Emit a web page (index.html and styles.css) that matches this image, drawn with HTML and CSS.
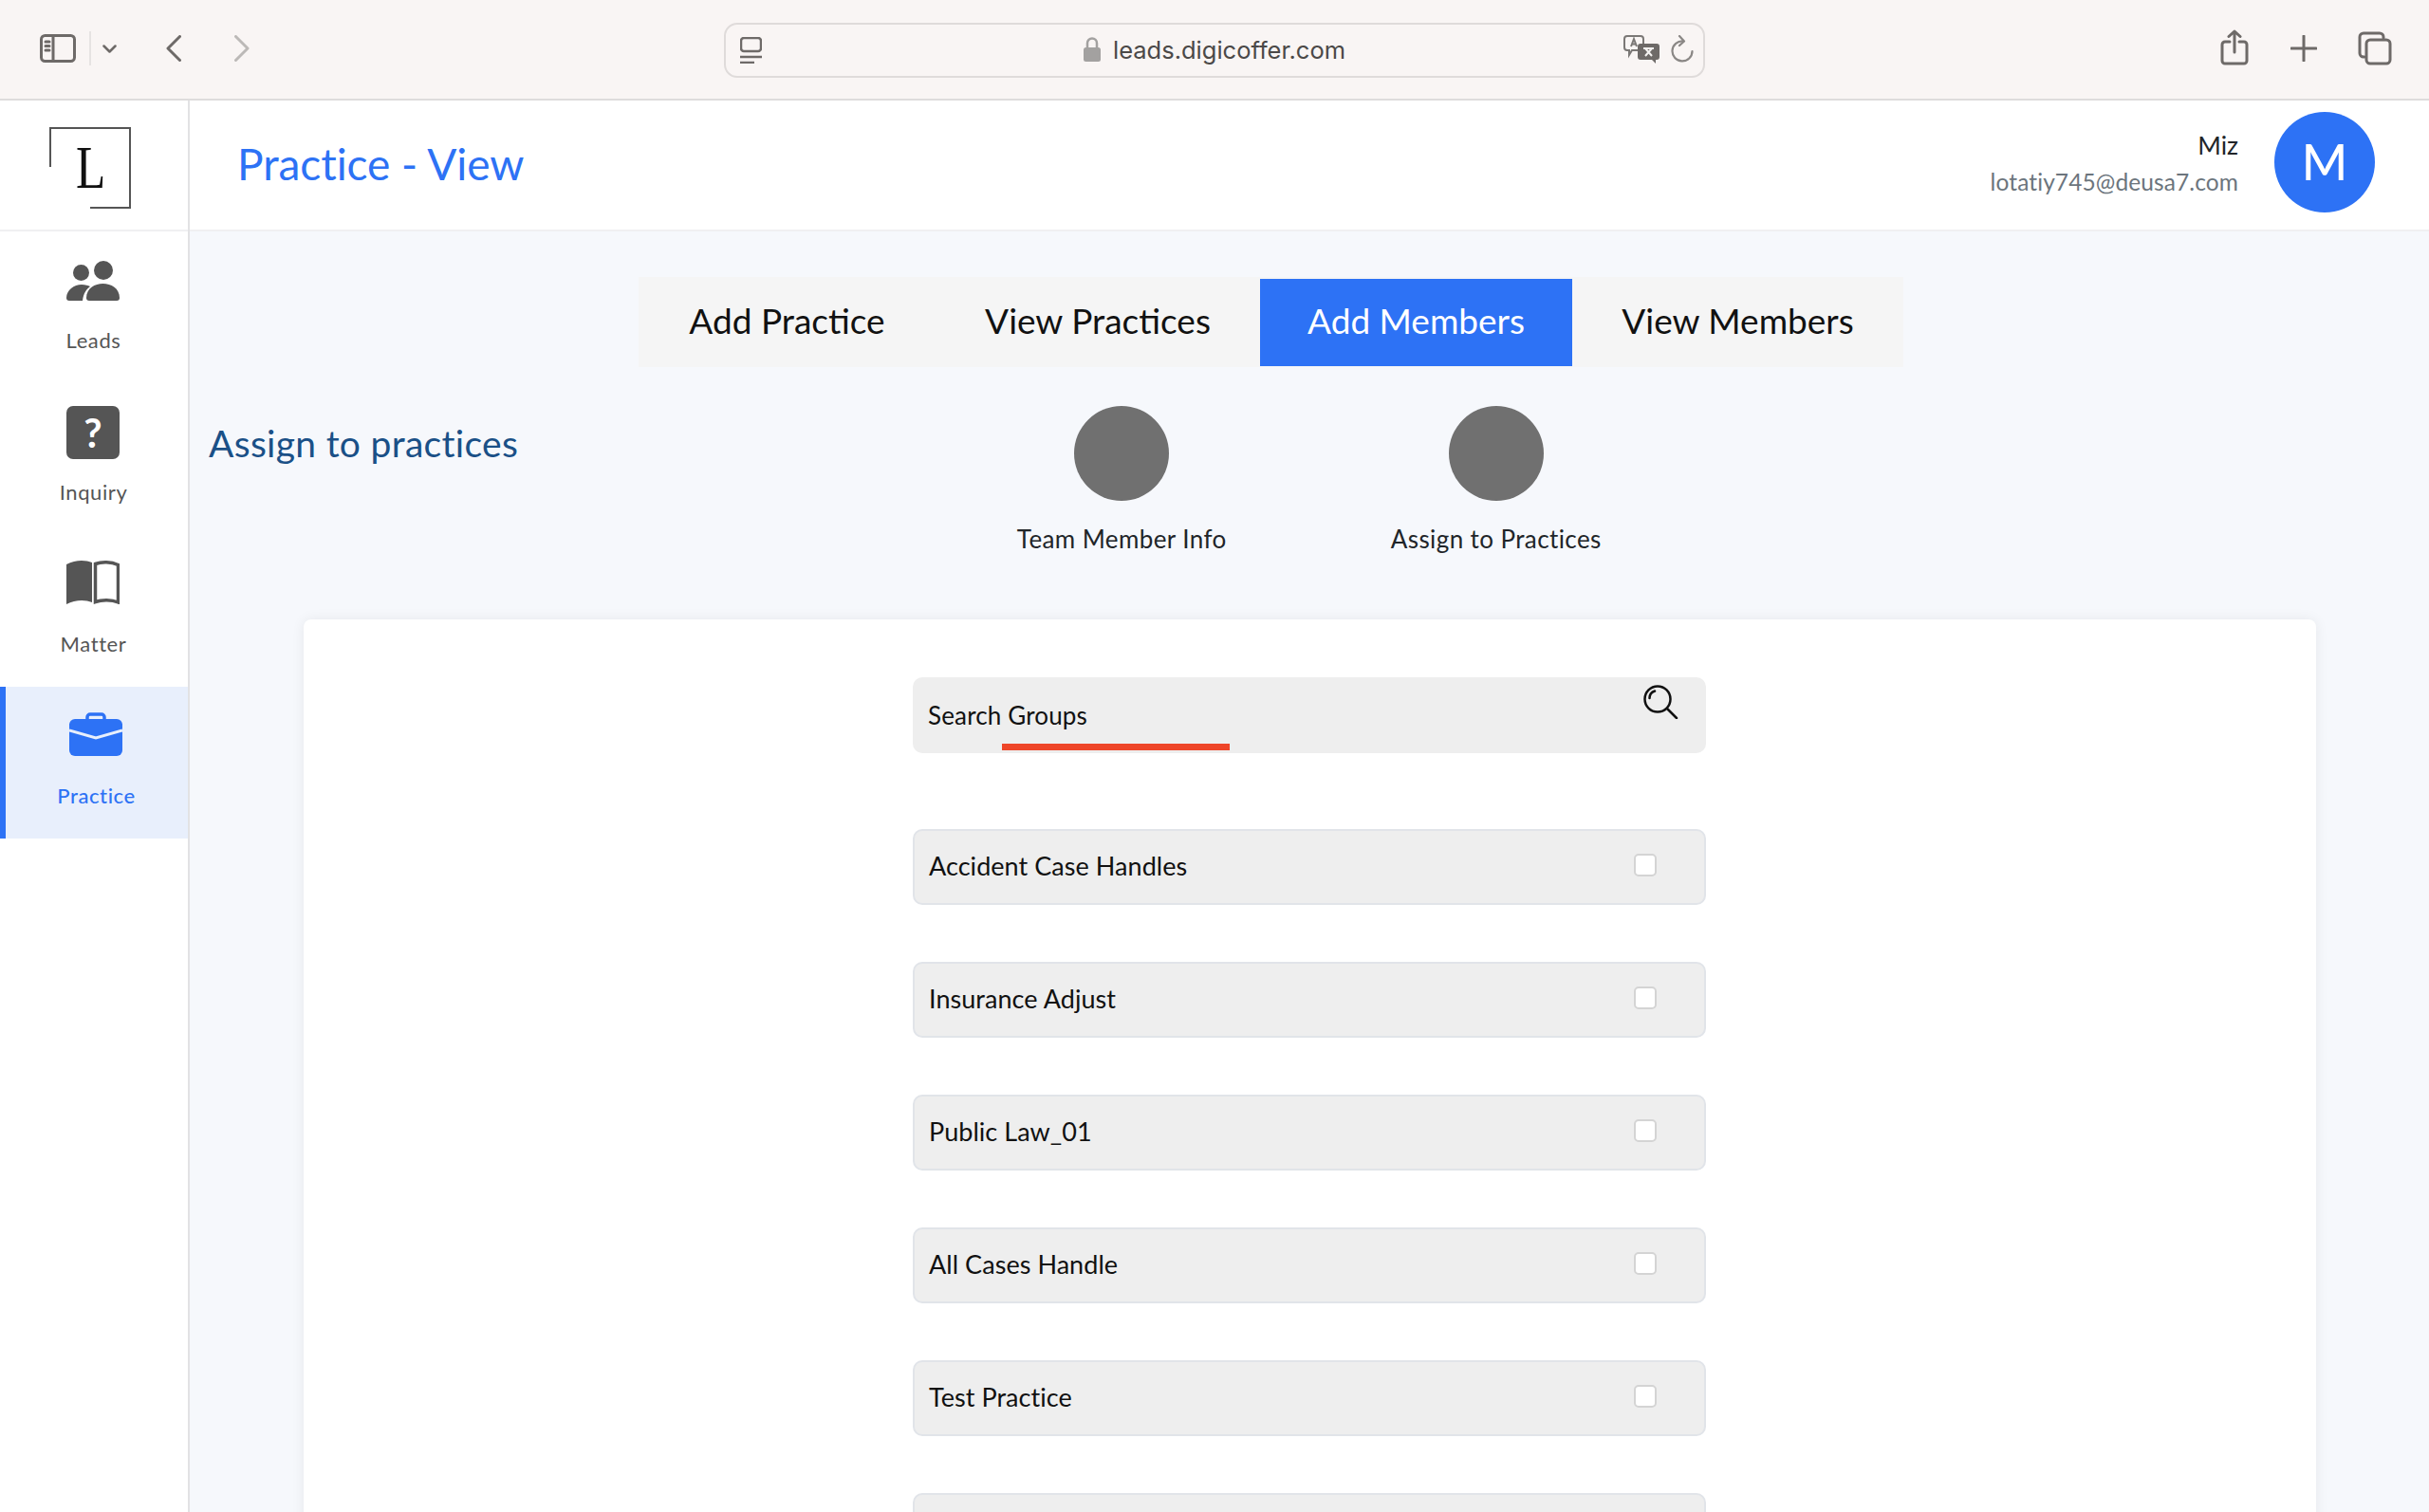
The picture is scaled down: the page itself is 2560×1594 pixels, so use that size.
FILE: index.html
```html
<!DOCTYPE html>
<html lang="en">
<head>
<meta charset="utf-8">
<title>Practice - View</title>
<link rel="stylesheet" href="styles.css">
</head>
<body>
<div class="toolbar">
  <div class="tb-left">
    <svg class="ti ti-side" viewBox="0 0 38 30"><rect x="1.500" y="1.500" width="35" height="27" rx="4"/><path d="M14 2v26M6 8h4M6 12.500h4M6 17h4"/></svg>
    <span class="tb-sep"></span>
    <svg class="ti ti-chev" viewBox="0 0 15 9"><path d="M1.500 1.500l6 6 6-6"/></svg>
    <svg class="ti ti-back" viewBox="0 0 16 28"><path d="M14.500 1.500L2 14l12.500 12.500"/></svg>
    <svg class="ti ti-fwd" viewBox="0 0 16 28"><path d="M1.500 1.500L14 14 1.500 26.500"/></svg>
  </div>
  <div class="urlbar">
    <svg class="ti ti-reader" viewBox="0 0 23 28"><rect x="1" y="1" width="21" height="14" rx="3"/><path d="M0 21h23M0 27h15"/></svg>
    <div class="url-center">
      <svg class="ti-lock" viewBox="0 0 18 26"><path class="shackle" d="M4 12V6.500a5 5 0 0 1 10 0V12"/><rect y="11" width="18" height="15" rx="2.500"/></svg>
      <span class="url-text">leads.digicoffer.com</span>
    </div>
    <svg class="ti-trans" viewBox="0 0 38 30"><path class="tr-a" d="M4 1h14a3 3 0 0 1 3 3v9a3 3 0 0 1-3 3H9l-3 5v-5H4a3 3 0 0 1-3-3V4a3 3 0 0 1 3-3z"/><path class="tr-a" d="M8 12l3-8 3 8M9 9.500h4"/><path class="tr-b" d="M18 9h17a3 3 0 0 1 3 3v11a3 3 0 0 1-3 3h-1v4l-4-4H18a3 3 0 0 1-3-3V12a3 3 0 0 1 3-3z"/><path class="tr-c" d="M21 14h11M23 22l7-8M30 22l-7-8"/></svg>
    <svg class="ti ti-reload" viewBox="0 0 24 30"><path d="M13 6.500A10.500 10.500 0 1 0 22.500 17"/><path d="M9 1l5 5.500L9 11"/></svg>
  </div>
  <div class="tb-right">
    <svg class="ti ti-share" viewBox="0 0 30 38"><path d="M10 13H5a3 3 0 0 0-3 3v17a3 3 0 0 0 3 3h20a3 3 0 0 0 3-3V16a3 3 0 0 0-3-3h-5M15 24V2M9 7.500L15 2l6 5.500"/></svg>
    <svg class="ti ti-plus" viewBox="0 0 28 28"><path d="M14 1v26M1 14h26"/></svg>
    <svg class="ti ti-tabs" viewBox="0 0 36 36"><path d="M7 27H6a4 4 0 0 1-4-4V6a4 4 0 0 1 4-4h17a4 4 0 0 1 4 4v1"/><rect x="9" y="9" width="25" height="25" rx="4"/></svg>
  </div>
</div>
<div class="app">
  <aside class="sidebar">
    <div class="logo">
      <svg class="logo-mark" viewBox="0 0 87 86">
        <path class="logo-frame" d="M1 42V1h84v84H43"/>
        <text class="logo-l" transform="scale(.8 1)" x="35" y="64">L</text>
      </svg>
    </div>
    <nav class="nav">
      <a class="nav-item">
        <svg class="nav-icon icon-leads" viewBox="0 0 56 42"><circle cx="15.500" cy="12.500" r="8.500"/><circle cx="39" cy="10" r="10"/><path d="M21 39c0-10 9-15 17.500-15S56 29 56 39a3 3 0 0 1-3 3H24a3 3 0 0 1-3-3z"/><path d="M0 39c0-8 8-14 16-14 4 0 7 1 9 2-4 3-7 7-8 15H3a3 3 0 0 1-3-3z"/></svg>
        <span class="nav-label">Leads</span>
      </a>
      <a class="nav-item">
        <span class="nav-icon icon-inquiry">?</span>
        <span class="nav-label">Inquiry</span>
      </a>
      <a class="nav-item">
        <svg class="nav-icon icon-matter" viewBox="0 0 56 47"><path class="pg-fill" d="M0 5C9 0 20 0 27 3v42c-7-3-18-3-27 2z"/><path class="pg-line" d="M30.500 4.500C37 2 47 2 54.500 5.500v39.500c-7-3-17-3-24-.5z"/></svg>
        <span class="nav-label">Matter</span>
      </a>
      <a class="nav-item active">
        <svg class="nav-icon icon-practice" viewBox="0 0 56 46"><path class="bc-handle" d="M19 8V5a3 3 0 0 1 3-3h12a3 3 0 0 1 3 3v3"/><rect y="7" width="56" height="39" rx="6"/><path class="bc-band" d="M0 19l28 8 28-8"/></svg>
        <span class="nav-label">Practice</span>
      </a>
    </nav>
  </aside>
  <div class="content">
    <header class="topbar">
      <h1 class="page-title">Practice - View</h1>
      <div class="user">
        <div class="user-text">
          <div class="user-name">Miz</div>
          <div class="user-mail">lotatiy745@deusa7.com</div>
        </div>
        <div class="avatar">M</div>
      </div>
    </header>
    <main class="main">
      <div class="tabs">
        <a class="tab">Add Practice</a>
        <a class="tab">View Practices</a>
        <a class="tab tab-active">Add Members</a>
        <a class="tab">View Members</a>
      </div>
      <div class="steps-row">
        <h2 class="section-title">Assign to practices</h2>
        <div class="step"><span class="step-dot"></span><span class="step-label">Team Member Info</span></div>
        <div class="step"><span class="step-dot"></span><span class="step-label">Assign to Practices</span></div>
      </div>
      <section class="card">
        <div class="search">
          <span class="search-text">Search Groups</span>
          <span class="search-mark"></span>
          <svg class="search-icon" viewBox="0 0 37 36"><circle cx="15" cy="15" r="13.500"/><path d="M25 25l10 10M6.500 14c0-4 2.500-6.500 5.500-7.500"/></svg>
        </div>
        <div class="rows">
          <label class="row"><span class="row-text">Accident Case Handles</span><span class="check"></span></label>
          <label class="row"><span class="row-text">Insurance Adjust</span><span class="check"></span></label>
          <label class="row"><span class="row-text">Public Law_01</span><span class="check"></span></label>
          <label class="row"><span class="row-text">All Cases Handle</span><span class="check"></span></label>
          <label class="row"><span class="row-text">Test Practice</span><span class="check"></span></label>
          <label class="row"><span class="row-text"></span><span class="check"></span></label>
        </div>
      </section>
    </main>
  </div>
</div>
</body>
</html>
```
FILE: styles.css
```css
* { box-sizing: border-box; }
html, body { margin: 0; height: 100%; overflow: hidden; }
body {
  width: 2560px;
  height: 1594px;
  display: flex;
  flex-direction: column;
  font-family: "Lato", "Liberation Sans", sans-serif;
  color: #111;
  background: #fff;
}

/* browser toolbar */
.toolbar {
  flex: 0 0 106px;
  display: grid;
  grid-template-columns: 763px 1034px 1fr;
  align-items: start;
  background: #f9f5f4;
  border-bottom: 2px solid #dedcdc;
}
.ti { fill: none; stroke: #6e6a68; stroke-width: 3; stroke-linecap: round; stroke-linejoin: round; display: block; flex: none; }
.tb-left { display: flex; align-items: center; height: 104px; padding: 0 0 2px 42px; }
.ti-side { width: 38px; height: 30px; }
.tb-sep { width: 2px; height: 36px; background: #e6e3e2; margin-left: 14px; }
.ti-chev { width: 15px; height: 9px; margin-left: 12px; stroke-width: 2.500; }
.ti-back { width: 16px; height: 28px; margin-left: 52px; }
.ti-fwd { width: 16px; height: 28px; margin-left: 56px; stroke: #bcb9b7; }
.urlbar {
  margin-top: 24px;
  height: 58px;
  position: relative;
  display: flex;
  align-items: center;
  border: 2px solid #dfdbda;
  border-radius: 14px;
  padding: 0 10px 0 15px;
}
.ti-reader { width: 23px; height: 28px; stroke-width: 2.500; stroke-linecap: butt; }
.url-center { position: absolute; left: 0; right: 0; top: 0; bottom: 2px; display: flex; align-items: center; justify-content: center; gap: 13px; }
.ti-lock { width: 18px; height: 26px; display: block; }
.ti-lock rect { fill: #a3a1a0; }
.ti-lock .shackle { fill: none; stroke: #a3a1a0; stroke-width: 2.500; }
.url-text { font-family: "Inter", "Liberation Sans", sans-serif; font-size: 25.500px; color: #4b4948; }
.ti-trans { width: 38px; height: 30px; margin-left: auto; position: relative; top: -1px; }
.tr-a { fill: none; stroke: #7b7876; stroke-width: 2; }
.tr-b { fill: #6e6a68; }
.tr-c { fill: none; stroke: #f4f2f1; stroke-width: 2; }
.ti-reload { width: 24px; height: 30px; margin-left: 12px; position: relative; top: -1px; stroke: #8a8785; stroke-width: 2.200; }
.tb-right { display: flex; align-items: center; justify-content: flex-end; height: 104px; padding: 0 39px 2px 0; }
.ti-share { width: 30px; height: 38px; margin-bottom: 2px; margin-right: 44px; }
.ti-plus { width: 28px; height: 28px; margin-right: 43px; }
.ti-tabs { width: 36px; height: 36px; }

/* app shell */
.app { flex: 1; display: flex; min-height: 0; }
.sidebar { flex: 0 0 200px; background: #fff; border-right: 2px solid #e2e2e4; display: flex; flex-direction: column; }
.logo { height: 138px; border-bottom: 2px solid #f0f0f2; display: flex; padding: 28px 0 0 52px; }
.logo-mark { width: 87px; height: 86px; display: block; }
.logo-frame { fill: none; stroke: #555; stroke-width: 2; }
.logo-l { font-family: "Liberation Serif", serif; font-size: 64px; fill: #111; }
.nav { display: flex; flex-direction: column; }
.nav-item { position: relative; height: 160px; display: flex; flex-direction: column; align-items: center; padding-right: 2px; color: #555; }
.nav-icon { display: block; fill: #555; flex: none; }
.nav-label { position: absolute; top: 101px; margin-left: 1px; font-size: 22px; letter-spacing: .6px; line-height: 28px; }
.icon-leads { width: 56px; height: 42px; margin-top: 31px; }
.icon-inquiry { width: 56px; height: 56px; margin-top: 24px; border-radius: 7px; background: #555; color: #fff; font-size: 42px; font-weight: 700; text-align: center; line-height: 56px; }
.icon-matter { width: 56px; height: 47px; margin-top: 26px; }
.pg-fill { fill: #555; }
.pg-line { fill: none; stroke: #555; stroke-width: 3.500; }
.nav-item.active { background: #e8effc; border-left: 6px solid #2d72f5; color: #2d72f5; }
.icon-practice { width: 56px; height: 46px; margin-top: 27px; fill: #2d72f5; }
.bc-handle { fill: none; stroke: #2d72f5; stroke-width: 3.500; }
.bc-band { fill: none; stroke: #e8effc; stroke-width: 3; }
.active .nav-label { font-weight: 500; }

.content { flex: 1; display: flex; flex-direction: column; min-width: 0; }
.topbar { flex: 0 0 138px; background: #fff; border-bottom: 2px solid #f0f0f2; display: flex; align-items: center; justify-content: space-between; padding: 0 57px 0 50px; }
.page-title { margin: 0 0 4px; font-size: 46px; font-weight: 400; letter-spacing: -.05px; color: #2d72f5; }
.user { display: flex; align-items: center; gap: 38px; margin-bottom: 6px; }
.user-text { text-align: right; }
.user-name { font-size: 26.500px; line-height: 41px; color: #212529; }
.user-mail { font-size: 24.500px; letter-spacing: .1px; line-height: 36px; color: #6c757d; }
.avatar { width: 106px; height: 106px; border-radius: 50%; background: #2d72f5; color: #fff; display: flex; align-items: center; justify-content: center; font-size: 52px; font-weight: 500; padding-bottom: 2px; }

.main { flex: 1; background: #f6f8fc; padding-top: 48px; min-height: 0; }
.tabs { display: grid; grid-template-columns: 313px 342px 329px 349px; margin-left: 473px; width: 1333px; padding: 2px 0 1px; background: #f5f5f5; height: 95px; }
.tab { display: flex; align-items: center; justify-content: center; font-size: 37px; color: #111; padding-bottom: 6px; }
.tab-active { background: #2d72f5; color: #fff; }
.steps-row { display: flex; margin: 41px 0 0 20px; height: 225px; }
.section-title { margin: 0; width: 765px; font-size: 39px; font-weight: 400; letter-spacing: .3px; color: #1a5087; padding-top: 14px; line-height: 50px; }
.step { width: 394.500px; display: flex; flex-direction: column; align-items: center; }
.step-dot { width: 100px; height: 100px; border-radius: 50%; background: #707070; }
.step-label { margin-top: 21px; font-size: 26px; letter-spacing: .4px; line-height: 38px; color: #212529; }

.card { margin: 0 119px 0 120px; background: #fff; border-radius: 8px; box-shadow: 0 0 14px rgba(0,0,0,.07); padding-top: 61px; height: 1000px; }
.search { position: relative; width: 836px; height: 80px; margin-left: 642px; background: #eee; border-radius: 10px; display: flex; align-items: center; padding-left: 16px; }
.search-text { font-size: 26px; letter-spacing: .15px; color: #111; }
.search-mark { position: absolute; left: 94px; width: 240px; height: 7px; bottom: 3px; background: #ee4528; }
.search-icon { position: absolute; right: 29px; top: 8px; width: 37px; height: 36px; fill: none; stroke: #111; stroke-width: 2.500; stroke-linecap: round; }
.rows { width: 836px; margin: 80px 0 0 642px; display: flex; flex-direction: column; gap: 60px; }
.row { height: 80px; flex: none; background: #eee; border: 2px solid #e1e4e9; border-radius: 10px; display: flex; align-items: center; justify-content: space-between; padding: 0 50px 4px 15px; }
.row-text { font-size: 27px; letter-spacing: .05px; color: #111; }
.check { width: 24px; height: 24px; border-radius: 5px; background: #fff; border: 2px solid #d4d4d4; }
```
